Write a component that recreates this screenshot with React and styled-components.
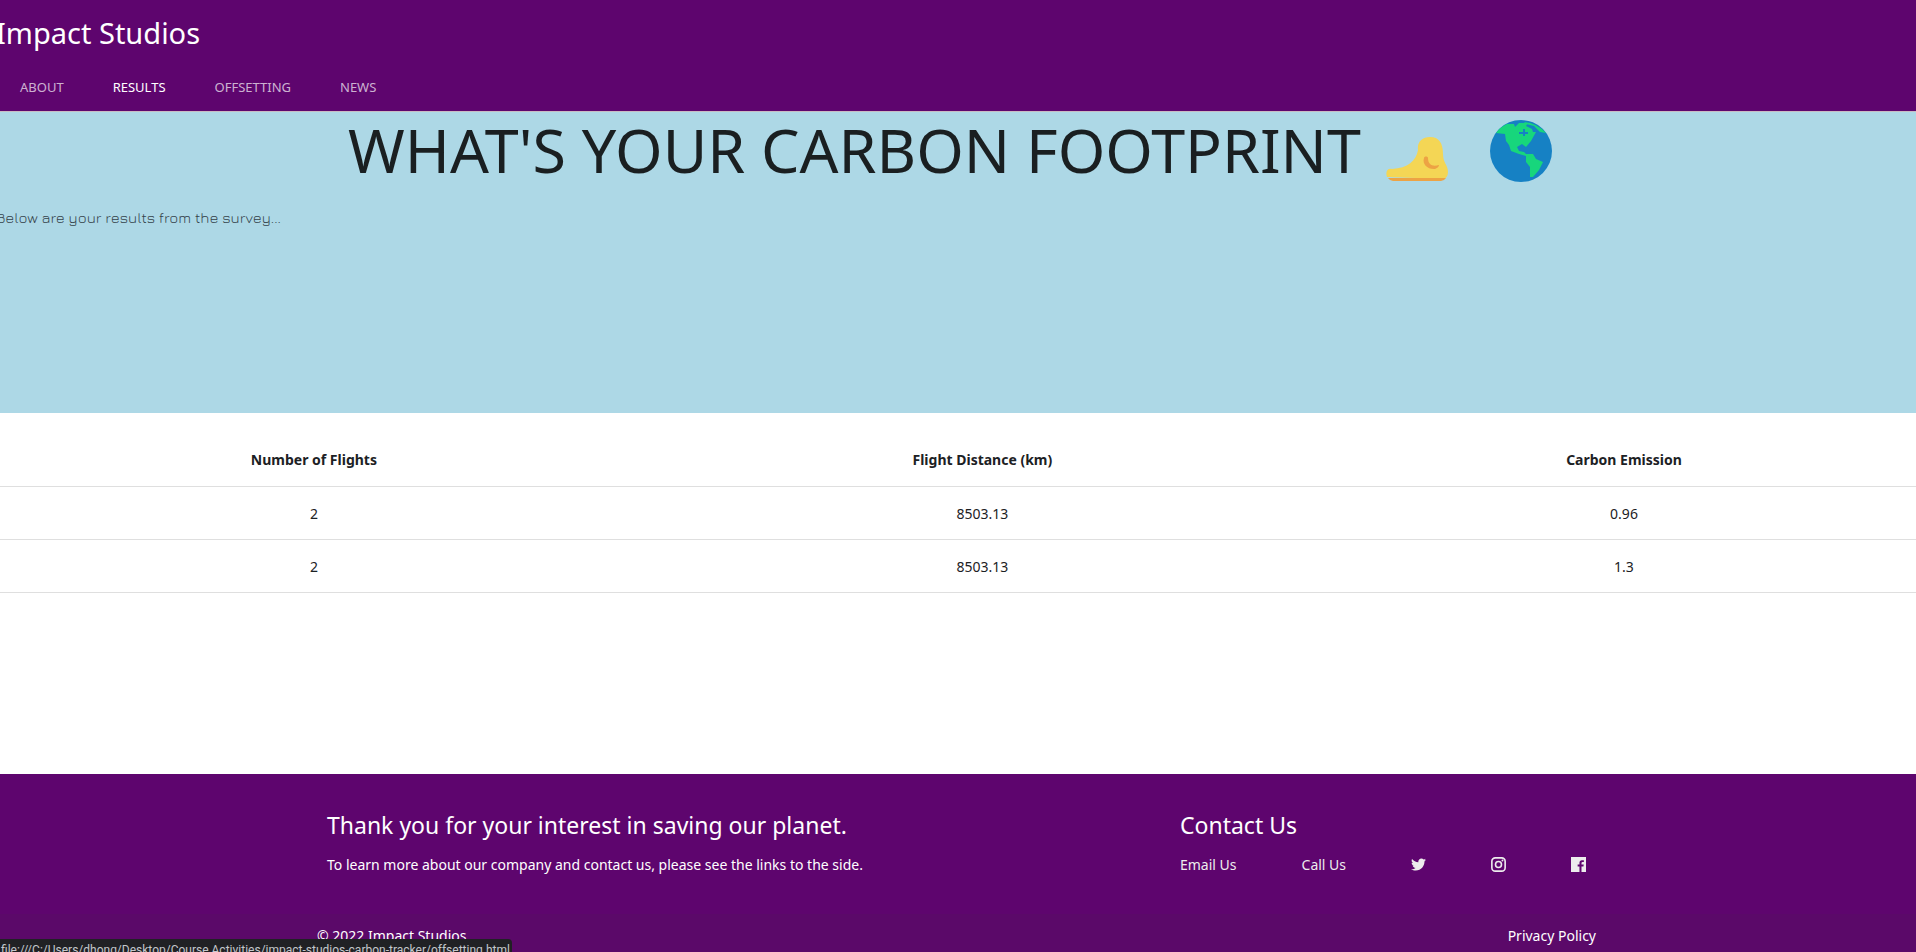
import React from "react";
import styled, { createGlobalStyle } from "styled-components";
import { FaTwitter } from "react-icons/fa";

const GlobalStyle = createGlobalStyle`
  *, *::before, *::after { box-sizing: border-box; }
  html, body { margin: 0; padding: 0; }
  body {
    background: #fff;
    color: #1c2124;
    font-family: "Segoe UI", "Noto Sans", "Open Sans", sans-serif;
    font-size: 14px;
    line-height: 24px;
    overflow: hidden;
  }
  h1, h2, p, ul { margin: 0; padding: 0; font-weight: 400; }
  ul { list-style: none; }
  a { color: inherit; text-decoration: none; }
`;

const Header = styled.header`
  background: #5e056e;
  border-bottom: 1px solid #c9bcc4;
`;

const Brand = styled.a`
  display: block;
  width: max-content;
  height: 64px;
  margin-left: -4px;
  font-size: 29px;
  line-height: 66px;
  color: #fff;
`;

const NavList = styled.ul`
  display: flex;
  gap: 49px;
  padding: 0 20px;
`;

const NavLink = styled.a`
  display: block;
  height: 47px;
  font-size: 13px;
  line-height: 46px;
  text-transform: uppercase;
  color: ${(p) => (p.$active ? "#fff" : "rgba(255, 255, 255, 0.7)")};
`;

const Hero = styled.section`
  height: 301px;
  background: #add8e6;
`;

const HeroTitle = styled.h1`
  display: flex;
  align-items: center;
  justify-content: center;
  height: 78px;
  padding-right: 16px;
  font-size: 61px;
  line-height: 76px;
  color: #1a1f21;
`;

const TitleText = styled.span`
  height: 78px;
`;

const Pictogram = styled.svg`
  width: 62px;
  height: 62px;
  margin-left: ${(p) => p.$gap}px;
`;

const Intro = styled.p`
  margin: 15px 0 0 -4px;
  font-family: "Jura", "Bai Jamjuree", "DejaVu Sans", sans-serif;
  font-weight: 400;
  font-size: 15px;
  line-height: 26px;
  color: #34424a;
`;

const TableArea = styled.main`
  min-height: 361px;
  padding-top: 20px;
  margin-left: -5px;
`;

const Table = styled.table`
  width: 100%;
  table-layout: fixed;
  border-collapse: collapse;
  text-align: center;
`;

const Col = styled.col`
  width: ${(p) => p.$share}%;
`;

const HeadCell = styled.th`
  height: 53px;
  padding: 2px 0 0;
  font-weight: 700;
  border-bottom: 1px solid #dfdfdf;
`;

const Cell = styled.td`
  height: 53px;
  padding: 2px 0 0;
  border-bottom: 1px solid #dfdfdf;
`;

const Footer = styled.footer`
  background: #5e056e;
  color: #fff;
`;

const FooterMain = styled.div`
  display: grid;
  grid-template-columns: 853fr 410fr;
  height: 140px;
  padding: 33px 326px 0 327px;
`;

const FooterTitle = styled.h2`
  font-size: 23px;
  line-height: 36px;
  white-space: nowrap;
`;

const FooterText = styled.p`
  margin-top: 10px;
  white-space: nowrap;
`;

const ContactList = styled.ul`
  display: flex;
  gap: 65px;
  margin-top: 10px;
  color: #ededed;
  white-space: nowrap;
`;

const IconLink = styled.a`
  display: flex;
  align-items: center;
  height: 22px;

  svg { display: block; width: 15px; height: 15px; }
`;

const FooterBar = styled.div`
  display: flex;
  justify-content: space-between;
  padding: 10px 320px 4px 317px;
  background: #5b0969;
`;

const StatusBar = styled.div`
  position: fixed;
  left: 0;
  bottom: 0;
  width: 512px;
  height: 13px;
  overflow: hidden;
  padding-left: 1px;
  border-top-right-radius: 4px;
  background: #202124;
  color: #c3c7cb;
  font-family: Roboto, sans-serif;
  font-size: 12px;
  line-height: 22px;
  white-space: nowrap;
`;

const nav = ["About", "Results", "Offsetting", "News"];
const rows = [
  ["2", "8503.13", "0.96"],
  ["2", "8503.13", "1.3"],
];

const Foot = () => (
  <Pictogram $gap={25} viewBox="0 0 62 62" role="img" aria-label="Foot">
    <path d="M1 57C-1 51 2 48 6 49C22 48 30 41 32 30C31 22 36 17 44 17C53 17 57 23 57 34C57 43 62 45 62 52C62 56 60 58 58 59Z" fill="#f4d655" />
    <path d="M2 58H60Q58 61 55 61H7Q4 61 2 58Z" fill="#eda344" />
    <path d="M38 38C36 44 41 49 48 49C50 49 53 47 53 45C47 47 42 45 42 38C42 36 38 36 38 38Z" fill="#eda344" />
  </Pictogram>
);

const Globe = () => (
  <Pictogram $gap={42} viewBox="0 0 62 62" role="img" aria-label="Globe">
    <circle cx="31" cy="31" r="31" fill="#1681c4" />
    <path d="M6 13Q10 7 17 4L24 4L25 7L29 3H38L36 6L42 9L43 12H46L41 21L36 27L32 24L27 27L29 31L34 32L36 34L43 34L46 39L53 42L49 50L43 57L40 57V47L36 42V36L29 34L21 31L19 25L16 21L15 14Z" fill="#17d67c" />
    <path d="M34 2Q47 3 56 13L50 12L44 6L36 4Z" fill="#17d67c" />
    <path d="M29 12H33V9H35V12H38V14H35V16H33V14H29Z" fill="#1681c4" />
  </Pictogram>
);

const InstagramMark = () => (
  <svg viewBox="0 0 14 14" aria-hidden="true" fill="none" stroke="currentColor" strokeWidth="1.5">
    <rect x="0.8" y="0.8" width="12.4" height="12.4" rx="3.2" />
    <circle cx="7" cy="7" r="2.8" />
    <circle cx="10.7" cy="3.3" r="0.9" fill="currentColor" stroke="none" />
  </svg>
);

const FacebookSquare = () => (
  <svg viewBox="0 0 14 14" aria-hidden="true">
    <path fill="currentColor" d="M0 0H14V14H9.800V8.800H11.600L11.900 6.900H9.800V5.700Q9.800 4.700 10.800 4.700H12V3H10.200Q7.900 3 7.900 5.400V6.900H6.200V8.800H7.900V14H0Z" />
  </svg>
);

export default function App() {
  return (
    <>
      <GlobalStyle />
      <Header>
        <Brand href="#home">Impact Studios</Brand>
        <nav>
          <NavList>
            {nav.map((item) => (
              <li key={item}>
                <NavLink href={`#${item.toLowerCase()}`} $active={item === "Results"}>{item}</NavLink>
              </li>
            ))}
          </NavList>
        </nav>
      </Header>
      <Hero>
        <HeroTitle>
          <TitleText>WHAT'S YOUR CARBON FOOTPRINT</TitleText>
          <Foot />
          <Globe />
        </HeroTitle>
        <Intro>Below are your results from the survey...</Intro>
      </Hero>
      <TableArea>
        <Table>
          <colgroup>
            <Col $share={33.2} />
            <Col $share={36.4} />
            <Col $share={30.4} />
          </colgroup>
          <thead>
            <tr>
              <HeadCell scope="col">Number of Flights</HeadCell>
              <HeadCell scope="col">Flight Distance (km)</HeadCell>
              <HeadCell scope="col">Carbon Emission</HeadCell>
            </tr>
          </thead>
          <tbody>
            {rows.map((row, r) => (
              <tr key={r}>
                {row.map((value, c) => <Cell key={c}>{value}</Cell>)}
              </tr>
            ))}
          </tbody>
        </Table>
      </TableArea>
      <Footer>
        <FooterMain>
          <div>
            <FooterTitle>Thank you for your interest in saving our planet.</FooterTitle>
            <FooterText>To learn more about our company and contact us, please see the links to the side.</FooterText>
          </div>
          <div>
            <FooterTitle>Contact Us</FooterTitle>
            <ContactList>
              <li><a href="#email">Email Us</a></li>
              <li><a href="#call">Call Us</a></li>
              <li><IconLink href="#twitter" aria-label="Twitter"><FaTwitter /></IconLink></li>
              <li><IconLink href="#instagram" aria-label="Instagram"><InstagramMark /></IconLink></li>
              <li><IconLink href="#facebook" aria-label="Facebook"><FacebookSquare /></IconLink></li>
            </ContactList>
          </div>
        </FooterMain>
        <FooterBar>
          <span>© 2022 Impact Studios</span>
          <a href="#privacy">Privacy Policy</a>
        </FooterBar>
      </Footer>
      <StatusBar>file:///C:/Users/dhong/Desktop/Course Activities/impact-studios-carbon-tracker/offsetting.html</StatusBar>
    </>
  );
}
